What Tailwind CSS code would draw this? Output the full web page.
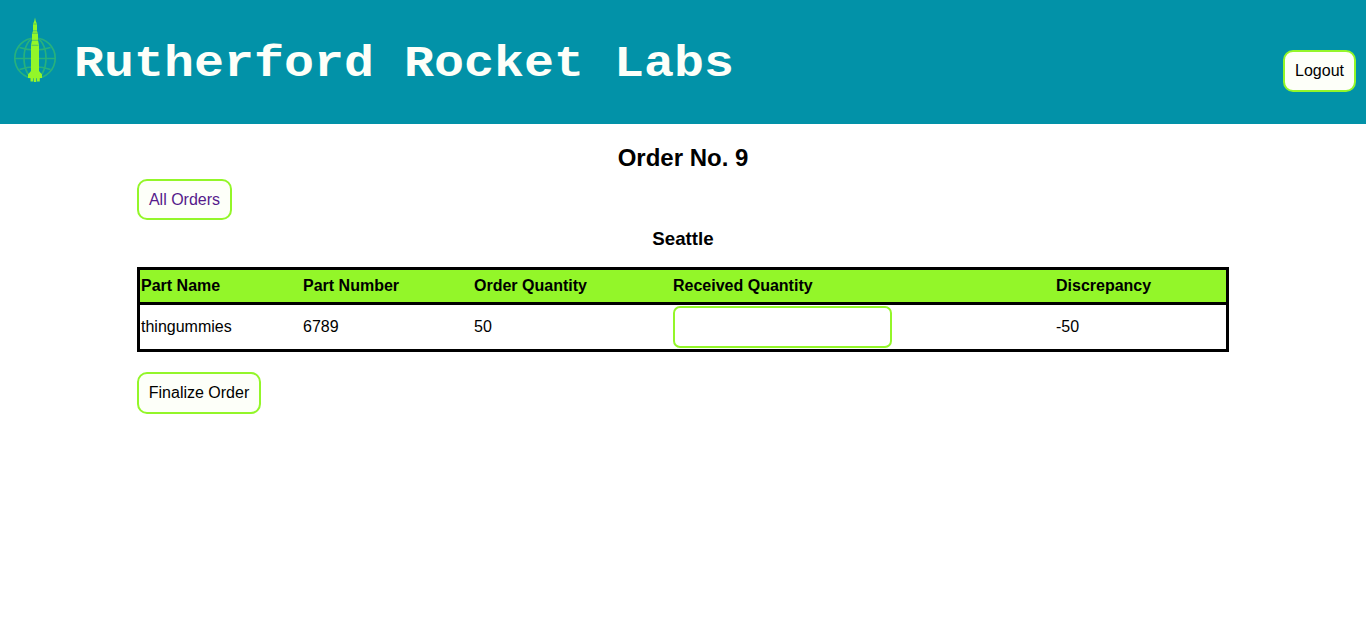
<!DOCTYPE html>
<html lang="en">
<head>
<meta charset="utf-8">
<title>Rutherford Rocket Labs</title>
<script src="https://cdn.jsdelivr.net/npm/@tailwindcss/browser@4"></script>
</head>
<body class="bg-white text-black text-base font-['Liberation_Sans',Arial,sans-serif]">
<header class="flex h-[124px] bg-[#0292a8] pr-[10px]">
  <svg class="ml-[10px] mt-[15px] h-[70px] w-[50px] shrink-0" viewBox="0 0 50 70" fill="none">
    <g stroke="#27b17d" stroke-width="1.7">
      <circle cx="25" cy="43.2" r="20.2"/>
      <ellipse cx="25" cy="43.2" rx="11" ry="20.2"/>
      <path d="M4.500 43.500h41M9.500 32.500Q25 37.500 40.500 32.500M9.500 54.500Q25 49 40.500 54.500"/>
    </g>
    <g fill="#93f629">
      <path d="M25 2.500L25.700 6L27 9V16L28 19V25L29 30V56L32 59.500V63H18V59.500L21 56V30L22 25V19L23 16V9L24.300 6Z"/>
      <path d="M20.500 63h2.800v3.500h-2.800zM23.900 63h2.400v4h-2.400zM27 63h2.800v3.500H27z"/>
    </g>
    <path stroke="#35b078" stroke-width="0.700" d="M23 9h4M23 15.800h4M22 18.200h6M22 25.300h6M21.500 30.300h7"/>
  </svg>
  <h1 class="ml-[14px] mt-[39px] h-[50px] origin-left scale-x-[1.136] whitespace-nowrap font-['Courier_New','Liberation_Mono',monospace] text-[44px] font-bold leading-[50px] text-[#fdfff9]">Rutherford Rocket Labs</h1>
  <button class="ml-auto mt-[50px] h-[42px] w-[73px] shrink-0 rounded-[10px] border-2 border-[#93f629] bg-[#fdfff9]">Logout</button>
</header>
<main class="mx-auto flex w-[1092px] flex-col items-start pt-[20px]">
  <h2 class="self-center text-2xl font-bold leading-[27px]">Order No. 9</h2>
  <a class="mt-[8px] flex h-[41px] w-[95px] items-center justify-center rounded-[10px] border-2 border-[#93f629] bg-[#fdfff9] text-[#551a8b]">All Orders</a>
  <h3 class="mt-[8px] self-center text-[18.72px] font-bold leading-[21px]">Seattle</h3>
  <section class="mt-[18px] w-full border-[3px] border-black">
    <div class="grid h-[32px] grid-cols-[162px_171px_199px_383px_1fr] items-center bg-[#93f629] pl-px font-bold">
      <span>Part Name</span><span>Part Number</span><span>Order Quantity</span><span>Received Quantity</span><span>Discrepancy</span>
    </div>
    <div class="grid h-[47px] grid-cols-[162px_171px_199px_383px_1fr] items-center border-t-[3px] border-black pl-px">
      <span>thingummies</span><span>6789</span><span>50</span><input class="h-[42px] w-[219px] rounded-[7px] border-2 border-[#93f629] bg-white px-2"><span>-50</span>
    </div>
  </section>
  <button class="mt-[20px] h-[42px] w-[124px] rounded-[10px] border-2 border-[#93f629] bg-[#fdfff9]">Finalize Order</button>
</main>
</body>
</html>
